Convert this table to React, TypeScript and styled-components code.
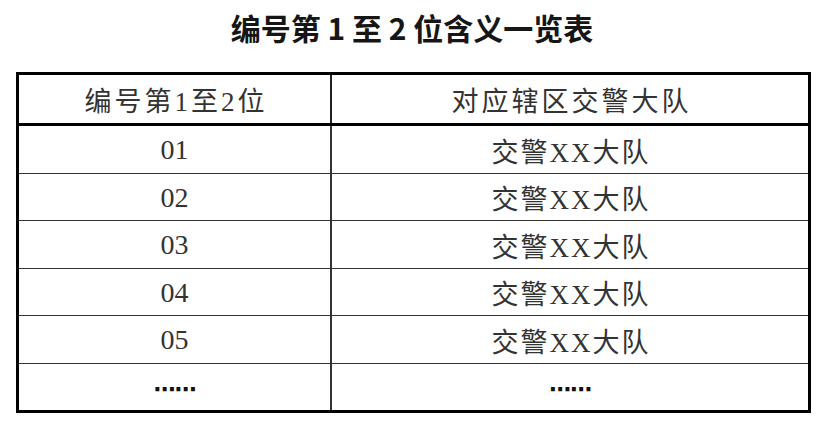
import React from "react";
import styled, { createGlobalStyle } from "styled-components";

const GlobalStyle = createGlobalStyle`
  html, body {
    margin: 0;
    padding: 0;
    background: #fff;
  }
`;

const Page = styled.div`
  width: 820px;
  height: 424px;
  display: flex;
  flex-direction: column;
  align-items: flex-start;
`;

const Title = styled.h1`
  align-self: stretch;
  margin: 0 0 18px 0;
  height: 54px;
  line-height: 54px;
  text-align: center;
  font-family: "Noto Sans CJK SC", "Noto Sans", sans-serif;
  font-weight: 700;
  font-size: 30px;
  color: #161616;
  padding-left: 4px;
`;

const Table = styled.table`
  margin-left: 16px;
  width: 795px;
  border-collapse: collapse;
  border: 3px solid #000;
  table-layout: fixed;
`;

const HeadCell = styled.th<{ $w?: number }>`
  ${(p) => (p.$w ? `width: ${p.$w}px;` : "")}
  height: 48px;
  padding: 0 0 0 3px;
  border-left: 2px solid #222;
  border-bottom: 3px solid #000;
  font-family: "Liberation Serif", "Noto Sans CJK SC", serif;
  font-weight: 400;
  font-size: 27px;
  letter-spacing: 3px;
  color: #333;
  text-align: center;
  vertical-align: middle;
  &:first-child {
    border-left: none;
  }
`;

const Cell = styled.td<{ $num?: boolean }>`
  height: 44.5px;
  padding: 2px 0 0 ${(p) => (p.$num ? 0 : 2)}px;
  border-left: 2px solid #333;
  border-top: 1.5px solid #333;
  font-family: "Liberation Serif", "Noto Sans CJK SC", serif;
  font-size: ${(p) => (p.$num ? 28 : 27)}px;
  letter-spacing: ${(p) => (p.$num ? 0 : 2)}px;
  color: #333;
  text-align: center;
  vertical-align: middle;
  &:first-child {
    border-left: none;
  }
`;

const Dots = styled.span`
  font-family: "DejaVu Sans", sans-serif;
  font-weight: 700;
  font-size: 22px;
  color: #111;
  letter-spacing: -1px;
`;

const rows = ["01", "02", "03", "04", "05"];

export default function App() {
  return (
    <Page>
      <GlobalStyle />
      <Title>编号第 1 至 2 位含义一览表</Title>
      <Table>
        <thead>
          <tr>
            <HeadCell $w={308}>编号第1至2位</HeadCell>
            <HeadCell>对应辖区交警大队</HeadCell>
          </tr>
        </thead>
        <tbody>
          {rows.map((r) => (
            <tr key={r}>
              <Cell $num>{r}</Cell>
              <Cell>交警XX大队</Cell>
            </tr>
          ))}
          <tr>
            <Cell $num>
              <Dots>⋯⋯</Dots>
            </Cell>
            <Cell $num>
              <Dots>⋯⋯</Dots>
            </Cell>
          </tr>
        </tbody>
      </Table>
    </Page>
  );
}
